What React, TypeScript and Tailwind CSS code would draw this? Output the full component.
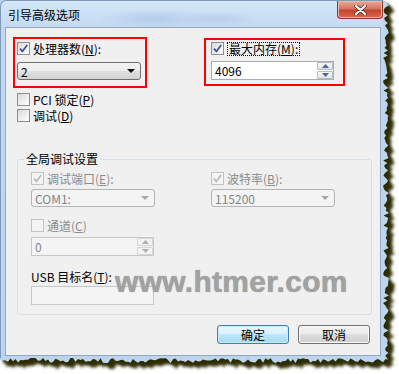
import type { ReactNode } from "react";

const FONT = "font-['Noto_Sans_CJK_SC','Noto_Sans',sans-serif]";

// jagged "torn paper" outline for the right and bottom edges of the window
function makeEdge() {
  let s = 11;
  const rnd = () => {
    s = (s * 9301 + 49297) % 233280;
    return s / 233280;
  };
  const pts: string[] = ["0,0", "383,0"];
  for (let y = 3; y < 360; y += 2.5) pts.push(`${(383 + rnd() * 6).toFixed(1)},${y}`);
  for (let x = 388; x > 0; x -= 2.5) pts.push(`${x},${(358 + rnd() * 5).toFixed(1)}`);
  pts.push("0,360");
  return pts.join(" ");
}
const EDGE = makeEdge();

function TornEdge() {
  return (
    <svg className="absolute inset-0" width="399" height="374" viewBox="0 0 399 374">
      <defs>
        <filter id="blur" x="-5%" y="-5%" width="110%" height="110%">
          <feGaussianBlur stdDeviation="1.8" />
        </filter>
      </defs>
      <polygon points={EDGE} transform="translate(6,6)" fill="#34330a" filter="url(#blur)" />
      <polygon points={EDGE} transform="translate(3,3)" fill="#2c2b06" filter="url(#blur)" />
      <polygon points={EDGE} fill="#bcd4ee" />
    </svg>
  );
}

function Key({ k }: { k: string }) {
  return (
    <span>
      (<span className="underline">{k}</span>)
    </span>
  );
}

function CheckBox({ checked, disabled }: { checked?: boolean; disabled?: boolean }) {
  return (
    <span
      className={`flex h-[13px] w-[13px] shrink-0 items-center justify-center border ${
        disabled ? "border-[#c3c3c3] bg-[#f4f4f4]" : "border-[#8e8f8f] bg-[linear-gradient(135deg,#d9d9d9,#ffffff)]"
      }`}
    >
      {checked && (
        <svg width="9" height="9" viewBox="0 0 9 9">
          <path
            d="M1 4.6 L3.4 7.4 L8.2 1"
            fill="none"
            stroke={disabled ? "#b9b9b9" : "#3b4f8e"}
            strokeWidth="1.7"
          />
        </svg>
      )}
    </span>
  );
}

function CheckRow({
  checked,
  disabled,
  children,
}: {
  checked?: boolean;
  disabled?: boolean;
  children: ReactNode;
}) {
  return (
    <div className={`flex h-[13px] items-center gap-[3px] ${disabled ? "text-[#8b8b8b]" : "text-black"}`}>
      <CheckBox checked={checked} disabled={disabled} />
      {children}
    </div>
  );
}

function Arrow({ color }: { color: string }) {
  return (
    <svg width="8" height="4" viewBox="0 0 8 4">
      <path d="M0 0 H8 L4 4 Z" fill={color} />
    </svg>
  );
}

function DropDown({ value, disabled }: { value: string; disabled?: boolean }) {
  return (
    <div
      className={`flex h-[18px] w-[124px] items-center justify-between rounded-[3px] border pl-[3px] pr-[5px] ${
        disabled
          ? "border-[#b0b4b7] bg-[#f4f4f4] text-[#858585]"
          : "border-[#707070] bg-[linear-gradient(#f3f3f3,#ececec_50%,#e0e0e0_50%,#d2d2d2)] text-black"
      }`}
    >
      <span>{value}</span>
      <Arrow color={disabled ? "#a8a8a8" : "#111111"} />
    </div>
  );
}

function SpinButton({ up, disabled }: { up?: boolean; disabled?: boolean }) {
  return (
    <div
      className={`flex h-[8px] items-center justify-center rounded-[1px] border ${
        disabled ? "border-[#d6d6d6] bg-[#f3f3f3]" : "border-[#b6bcc6] bg-[linear-gradient(#f7f7f7,#e4e4e4)]"
      }`}
    >
      <svg width="7" height="4" viewBox="0 0 7 4">
        <path d={up ? "M0 4 H7 L3.5 0 Z" : "M0 0 H7 L3.5 4 Z"} fill={disabled ? "#b0b0b0" : "#4d6498"} />
      </svg>
    </div>
  );
}

function SpinField({ value, disabled }: { value: string; disabled?: boolean }) {
  return (
    <div
      className={`flex h-[19px] w-[123px] items-center border ${
        disabled ? "border-[#c5c7ca] bg-[#f4f4f4] text-[#858585]" : "border-[#abadb3] bg-white text-black"
      }`}
    >
      <span className="flex-1 pl-[3px]">{value}</span>
      <div className="flex w-[16px] flex-col gap-px">
        <SpinButton up disabled={disabled} />
        <SpinButton disabled={disabled} />
      </div>
    </div>
  );
}

function DialogButton({ children, focused }: { children: ReactNode; focused?: boolean }) {
  return (
    <button
      className={`flex h-[19px] w-[72px] items-center justify-center rounded-[3px] border text-[12px] text-black ${
        focused
          ? "border-[#3c7fb1] bg-[linear-gradient(#eaf6fd,#d9f0fc_50%,#bee6fd_50%,#a7d9f5)] shadow-[inset_0_0_0_1px_#c9ecfd]"
          : "border-[#707070] bg-[linear-gradient(#f2f2f2,#ebebeb_50%,#dddddd_50%,#cfcfcf)] shadow-[inset_0_0_0_1px_#fbfbfb]"
      }`}
    >
      {children}
    </button>
  );
}

export default function App() {
  return (
    <div className={`relative h-[374px] w-[399px] overflow-hidden bg-white text-[12px] leading-[13px] ${FONT}`}>
      <TornEdge />

      <div className="relative h-[358px] w-[383px] rounded-tl-[6px] border-l border-t border-[#7f9ab8] bg-[linear-gradient(180deg,#d4e6f8,#c2d9f1_30px,#bcd4ee)] pl-[4px] pr-[2px]">
        {/* title bar */}
        <div className="flex h-[26px] items-start bg-[radial-gradient(ellipse_60px_10px_at_150px_18px,#b3cdeb,transparent),radial-gradient(ellipse_40px_8px_at_215px_18px,#b7d0ec,transparent)]">
          <span className="pl-[3px] pt-[6px] text-[12px] leading-[16px] text-black">引导高级选项</span>
          <div className="ml-auto mr-[-2px] flex h-[18px] w-[46px] items-center justify-center rounded-b-[4px] border border-t-0 border-[#8a3a2c] bg-[linear-gradient(#e9a99c,#d47563_45%,#c7432c_55%,#d96a4c)] shadow-[inset_0_0_0_1px_#f0b6aa]">
            <svg width="13" height="10" viewBox="0 0 13 10">
              <path d="M2 1 L11 9 M11 1 L2 9" stroke="#5a2a22" strokeWidth="3.6" strokeLinecap="round" />
              <path d="M2 1 L11 9 M11 1 L2 9" stroke="#ffffff" strokeWidth="2.2" strokeLinecap="round" />
            </svg>
          </div>
        </div>

        {/* client area */}
        <div className="flex h-[329px] w-[376px] flex-col border border-[#93a8c0] bg-[#f0f0f0]">
          <div className="flex pt-[9px]">
            <div className="ml-[7px] h-[51px] w-[134px] border-2 border-[#ff0000] pl-[2px] pt-[3px]">
              <CheckRow checked>
                <span>
                  处理器数<Key k="N" />:
                </span>
              </CheckRow>
              <div className="mt-[7px]">
                <DropDown value="2" />
              </div>
            </div>

            <div className="ml-[57px] mt-[1px] h-[48px] w-[141px] border-2 border-[#ff0000] pl-[5px] pt-[2px]">
              <CheckRow checked>
                <span className="border border-dotted border-black px-px leading-[12px]">
                  最大内存<Key k="M" />:
                </span>
              </CheckRow>
              <div className="mt-[6px]">
                <SpinField value="4096" />
              </div>
            </div>
          </div>

          <div className="ml-[11px] mt-[5px] flex flex-col gap-[3px]">
            <CheckRow>
              <span>
                PCI 锁定<Key k="P" />
              </span>
            </CheckRow>
            <CheckRow>
              <span>
                调试<Key k="D" />
              </span>
            </CheckRow>
          </div>

          {/* group box */}
          <div className="relative ml-[11px] mt-[37px] h-[156px] w-[355px] rounded-[3px] border border-[#d5dfe5] pl-[13px] pt-[12px]">
            <span className="absolute left-[6px] top-[-8px] bg-[#f0f0f0] px-[2px] leading-[14px] text-black">
              全局调试设置
            </span>
            <div className="grid grid-cols-[123px_123px] gap-x-[57px]">
              <div className="flex flex-col">
                <CheckRow checked disabled>
                  <span>
                    调试端口<Key k="E" />:
                  </span>
                </CheckRow>
                <div className="mt-[4px]">
                  <DropDown value="COM1:" disabled />
                </div>
                <div className="mt-[12px]">
                  <CheckRow disabled>
                    <span>
                      通道<Key k="C" />
                    </span>
                  </CheckRow>
                </div>
                <div className="mt-[5px]">
                  <SpinField value="0" disabled />
                </div>
                <span className="mt-[14px] h-[13px] text-black">
                  USB 目标名<Key k="T" />:
                </span>
                <div className="mt-[3px] h-[19px] w-[123px] border border-[#c5c7ca] bg-[#f4f4f4]" />
              </div>
              <div className="flex flex-col">
                <CheckRow checked disabled>
                  <span>
                    波特率<Key k="B" />:
                  </span>
                </CheckRow>
                <div className="mt-[4px]">
                  <DropDown value="115200" disabled />
                </div>
              </div>
            </div>
          </div>

          <div className="mt-[10px] flex justify-end gap-[9px] pr-[10px]">
            <DialogButton focused>确定</DialogButton>
            <DialogButton>取消</DialogButton>
          </div>
        </div>
      </div>

      {/* watermark */}
      <span className="absolute left-[115px] top-[265px] font-['Liberation_Sans',sans-serif] text-[30px] font-bold leading-[34px] tracking-[0.3px] text-[#a2a2a2] [text-shadow:0_0_1px_#8a8a8a]">
        www.htmer.com
      </span>
    </div>
  );
}
